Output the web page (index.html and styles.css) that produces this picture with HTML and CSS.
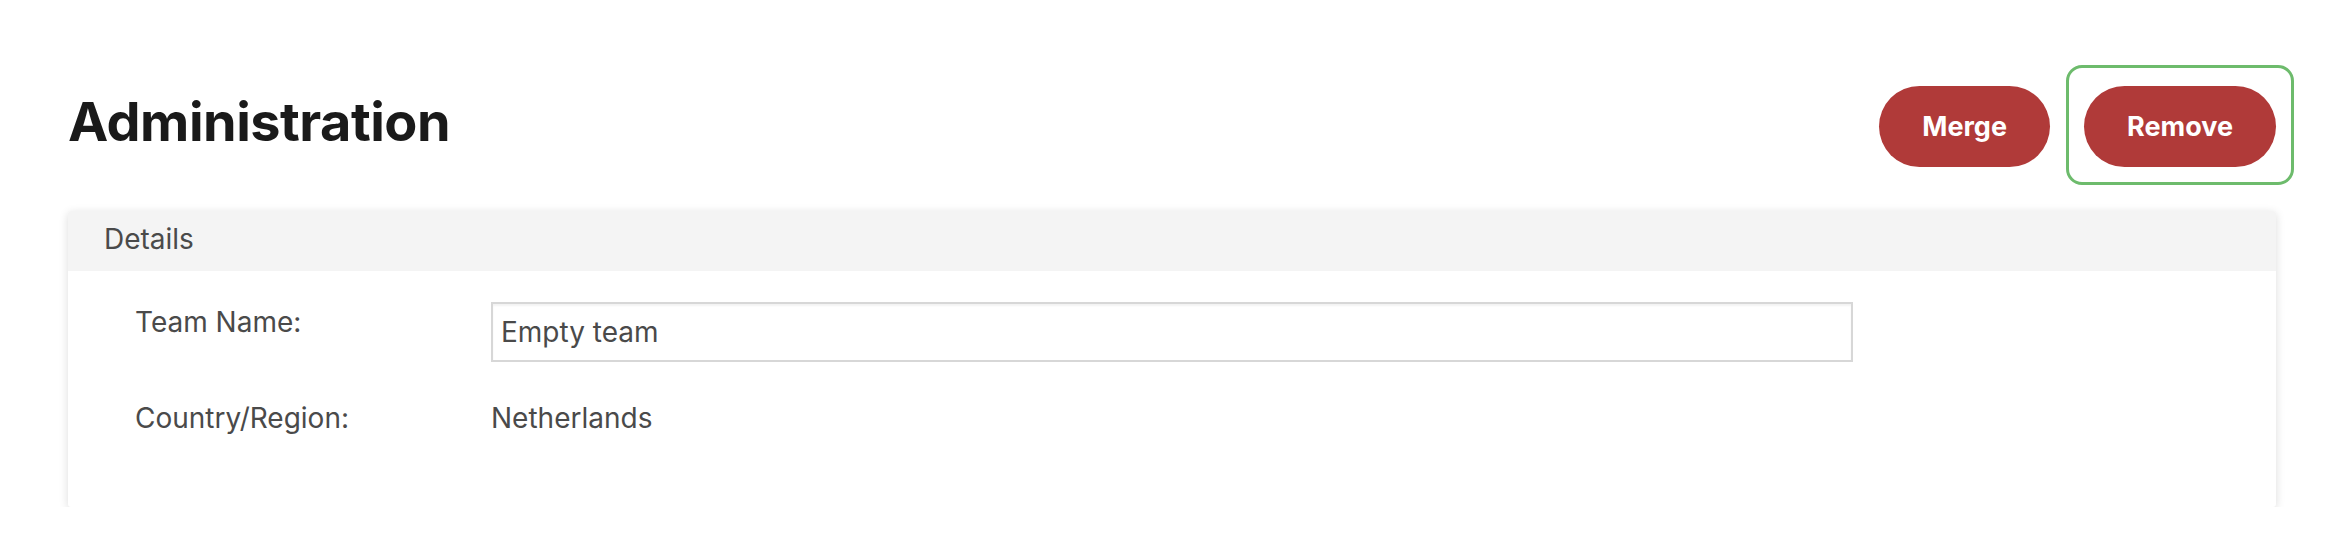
FILE: index.html
```html
<!DOCTYPE html>
<html lang="en">
<head>
<meta charset="utf-8">
<title>Administration</title>
<link rel="stylesheet" href="styles.css">
</head>
<body>
<main class="page">
  <div class="top-row">
    <h1 class="title">Administration</h1>
    <div class="actions">
      <button class="btn" type="button">Merge</button>
      <button class="btn btn-focused" type="button">Remove</button>
    </div>
  </div>
  <section class="card">
    <div class="card-header">Details</div>
    <div class="card-body">
      <div class="field-row">
        <div class="field-label">Team Name:</div>
        <input class="text-input" type="text" value="Empty team">
      </div>
      <div class="field-row">
        <div class="field-label">Country/Region:</div>
        <div class="field-value">Netherlands</div>
      </div>
    </div>
  </section>
</main>
</body>
</html>
```
FILE: styles.css
```css
* { box-sizing: border-box; }
html, body { margin: 0; padding: 0; background: #ffffff; }
body {
  font-family: Inter, "Noto Sans", "Liberation Sans", sans-serif;
  color: #484848;
}
.page {
  padding: 86px 62px 0 68px;
}
.top-row {
  display: flex;
  justify-content: space-between;
  align-items: flex-start;
}
.title {
  margin: 3px 0 0 0;
  font-size: 54px;
  line-height: 65px;
  font-weight: 700;
  color: #1a1a1a;
  letter-spacing: -0.5px;
}
.actions {
  display: flex;
  gap: 34px;
}
.btn {
  position: relative;
  height: 81px;
  padding: 0 43px;
  border: none;
  border-radius: 41px;
  background: #b03a39;
  color: #ffffff;
  font-family: Inter, "Noto Sans", "Liberation Sans", sans-serif;
  font-size: 27px;
  font-weight: 700;
  cursor: pointer;
}
.btn-focused::after {
  content: "";
  position: absolute;
  top: -21px;
  bottom: -18px;
  left: -18px;
  right: -18px;
  border: 3px solid #6dbb6c;
  border-radius: 16px;
  pointer-events: none;
}
.card {
  margin-top: 44px;
  background: #ffffff;
  border-radius: 3px;
  box-shadow: 0 2px 10px rgba(0, 0, 0, 0.14);
  overflow: hidden;
}
.card-header {
  background: #f4f4f4;
  height: 60px;
  padding: 0 0 4px 36px;
  font-size: 28px;
  line-height: 56px;
  color: #4a4a4a;
}
.card-body {
  padding: 31px 0 69px 67px;
  display: flex;
  flex-direction: column;
  gap: 36px;
}
.field-row {
  display: grid;
  grid-template-columns: 356px 1362px;
  align-items: start;
}
.field-label, .field-value {
  font-size: 28px;
  line-height: 40px;
  color: #4a4a4a;
}
.text-input {
  width: 1362px;
  height: 60px;
  border: 2px solid #d7d7d7;
  border-radius: 0;
  box-shadow: inset 0 2px 2px rgba(0, 0, 0, 0.05);
  padding: 0 8px;
  font-family: Inter, "Noto Sans", "Liberation Sans", sans-serif;
  font-size: 28px;
  color: #4a4a4a;
  background: #ffffff;
  outline: none;
}
```
